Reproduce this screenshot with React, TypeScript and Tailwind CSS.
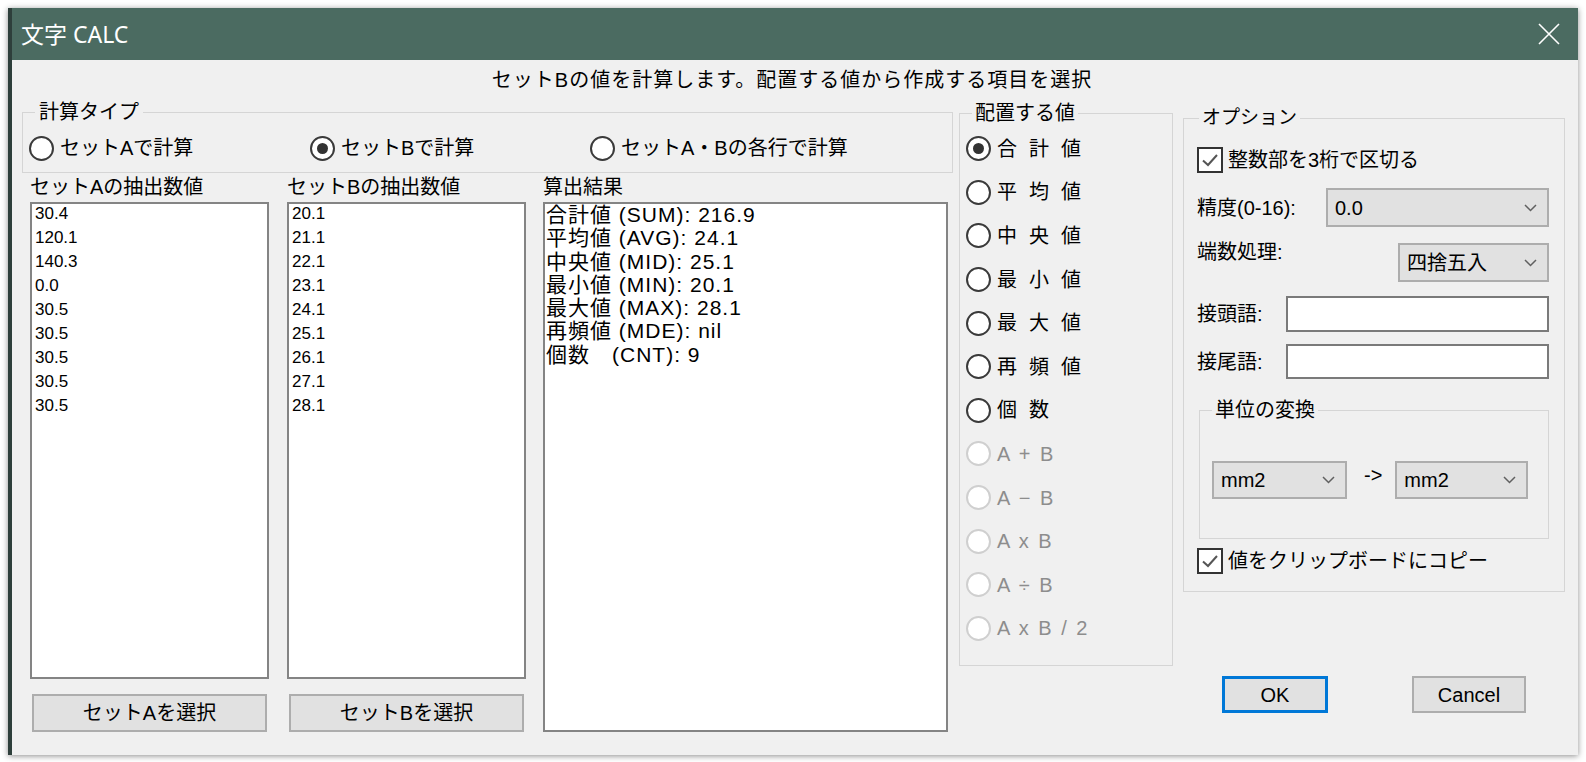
import React from 'react';

const listA = ['30.4', '120.1', '140.3', '0.0', '30.5', '30.5', '30.5', '30.5', '30.5'];
const listB = ['20.1', '21.1', '22.1', '23.1', '24.1', '25.1', '26.1', '27.1', '28.1'];
const results = [
  '合計値 (SUM): 216.9',
  '平均値 (AVG): 24.1',
  '中央値 (MID): 25.1',
  '最小値 (MIN): 20.1',
  '最大値 (MAX): 28.1',
  '再頻値 (MDE): nil',
  '個数\u3000(CNT): 9',
];

const placeItems = [
  { label: '合計値', checked: true },
  { label: '平均値' },
  { label: '中央値' },
  { label: '最小値' },
  { label: '最大値' },
  { label: '再頻値' },
  { label: '個数' },
  { label: 'A + B', disabled: true },
  { label: 'A − B', disabled: true },
  { label: 'A x B', disabled: true },
  { label: 'A ÷ B', disabled: true },
  { label: 'A x B / 2', disabled: true },
];

function Radio({ checked = false, disabled = false }: { checked?: boolean; disabled?: boolean }) {
  return (
    <span
      className={`flex h-[25px] w-[25px] shrink-0 items-center justify-center rounded-full border-2 bg-white ${
        disabled ? 'border-[#cfcfcf]' : 'border-[#3a3a3a]'
      }`}
    >
      {checked && <span className="h-[11px] w-[11px] rounded-full bg-[#333333]" />}
    </span>
  );
}

function Checkbox() {
  return (
    <span className="flex h-[26px] w-[26px] shrink-0 items-center justify-center border-2 border-[#333333] bg-white">
      <svg width="20" height="20" viewBox="0 0 20 20" fill="none">
        <path d="M3 10.5 L8 15 L17 5" stroke="#555555" strokeWidth="2" />
      </svg>
    </span>
  );
}

function Chevron() {
  return (
    <svg width="13" height="8" viewBox="0 0 13 8" fill="none">
      <path d="M1 1 L6.5 6.5 L12 1" stroke="#606060" strokeWidth="1.5" />
    </svg>
  );
}

function Combo({ value, className }: { value: string; className: string }) {
  return (
    <div
      className={`flex items-center justify-between border-2 border-[#adadad] bg-[#e1e1e1] pl-[7px] pr-[10px] ${className}`}
    >
      <span>{value}</span>
      <Chevron />
    </div>
  );
}

export default function App() {
  return (
    <div className="min-h-screen bg-white p-[8px] font-['Liberation_Sans','Noto_Sans_CJK_JP',sans-serif] text-[20px] text-black">
      <div className="flex h-[747px] w-[1570px] flex-col border-l-4 border-[#2e3f3b] bg-[#f0f0f0] shadow-[0_1px_6px_rgba(0,0,0,0.45)]">
        {/* Title bar */}
        <div className="flex h-[52px] shrink-0 items-center justify-between bg-[#4b6b61] pl-[9px] pr-[18px]">
          <span className="font-['Noto_Sans','Noto_Sans_CJK_JP',sans-serif] text-[23px] text-white">文字 CALC</span>
          <svg width="22" height="22" viewBox="0 0 22 22" fill="none">
            <path d="M1 1 L21 21 M21 1 L1 21" stroke="#ffffff" strokeWidth="1.6" />
          </svg>
        </div>

        {/* Header */}
        <div className="flex h-[40px] shrink-0 justify-center pr-[6px] pt-[8px] leading-[24px] tracking-[1px]">
          セットBの値を計算します。配置する値から作成する項目を選択
        </div>

        {/* Main */}
        <div className="flex items-start pl-[10px]">
          {/* Left */}
          <div className="flex w-[931px] flex-col">
            <fieldset className="border border-[#d5d5d5]">
              <legend className="ml-[12px] px-[4px] leading-[24px]">計算タイプ</legend>
              <div className="flex h-[48px] items-center pl-[6px]">
                <div className="flex w-[281px] items-center gap-[6px]">
                  <Radio />
                  <span>セットAで計算</span>
                </div>
                <div className="flex w-[280px] items-center gap-[6px]">
                  <Radio checked />
                  <span>セットBで計算</span>
                </div>
                <div className="flex items-center gap-[6px]">
                  <Radio />
                  <span>セットA・Bの各行で計算</span>
                </div>
              </div>
            </fieldset>

            <div className="flex">
              <div className="ml-[8px] flex w-[239px] flex-col">
                <div className="h-[29px] pt-[2px] leading-[24px]">セットAの抽出数値</div>
                <div className="h-[477px] border-2 border-[#848484] bg-white px-[3px] pt-[1px] text-[17px]">
                  {listA.map((v, i) => (
                    <div key={i} className="h-[24px] leading-[17px]">
                      {v}
                    </div>
                  ))}
                </div>
                <button className="mx-[2px] mt-[15px] h-[38px] border-2 border-[#adadad] bg-[#e1e1e1]">
                  セットAを選択
                </button>
              </div>

              <div className="ml-[18px] flex w-[239px] flex-col">
                <div className="h-[29px] pt-[2px] leading-[24px]">セットBの抽出数値</div>
                <div className="h-[477px] border-2 border-[#848484] bg-white px-[3px] pt-[1px] text-[17px]">
                  {listB.map((v, i) => (
                    <div key={i} className="h-[24px] leading-[17px]">
                      {v}
                    </div>
                  ))}
                </div>
                <button className="mx-[2px] mt-[15px] h-[38px] border-2 border-[#adadad] bg-[#e1e1e1]">
                  セットBを選択
                </button>
              </div>

              <div className="ml-[17px] flex w-[405px] flex-col">
                <div className="h-[29px] pt-[2px] leading-[24px]">算出結果</div>
                <div className="h-[530px] border-2 border-[#848484] bg-white px-[1px] pt-[1px] text-[21px] tracking-[1px]">
                  {results.map((v, i) => (
                    <div key={i} className="h-[23.3px] whitespace-pre leading-[20px]">
                      {v}
                    </div>
                  ))}
                </div>
              </div>
            </div>
          </div>

          {/* Placement values */}
          <fieldset className="ml-[6px] mt-[1px] h-[565px] w-[214px] border border-[#d5d5d5]">
            <legend className="ml-[12px] px-[3px] leading-[24px]">配置する値</legend>
            <div className="flex flex-col pl-[6px] pt-[2px]">
              {placeItems.map((it, i) => (
                <div key={i} className="flex h-[43.6px] items-center gap-[6px]">
                  <Radio checked={it.checked} disabled={it.disabled} />
                  {it.disabled ? (
                    <span className="tracking-[2px] text-[#8d8d8d]">{it.label}</span>
                  ) : (
                    <span className="tracking-[12px]">{it.label}</span>
                  )}
                </div>
              ))}
            </div>
          </fieldset>

          {/* Options */}
          <div className="ml-[10px] flex w-[382px] flex-col">
            <fieldset className="mt-[6px] h-[486px] border border-[#d5d5d5] pl-[13px] pr-[15px]">
              <legend className="ml-[2px] px-[3px] text-[19px] leading-[24px]">オプション</legend>
              <div className="mt-[17px] flex h-[26px] items-center gap-[5px]">
                <Checkbox />
                <span>整数部を3桁で区切る</span>
              </div>
              <div className="mt-[15px] flex items-center justify-between">
                <span>精度(0-16):</span>
                <Combo value="0.0" className="h-[39px] w-[223px]" />
              </div>
              <div className="mt-[16px] flex items-start justify-between">
                <span className="-mt-[3px] leading-[24px]">端数処理:</span>
                <Combo value="四捨五入" className="h-[39px] w-[151px]" />
              </div>
              <div className="mt-[14px] flex items-center justify-between">
                <span>接頭語:</span>
                <div className="h-[36px] w-[263px] border-2 border-[#7a7a7a] bg-white" />
              </div>
              <div className="mt-[12px] flex items-center justify-between">
                <span>接尾語:</span>
                <div className="h-[35px] w-[263px] border-2 border-[#7a7a7a] bg-white" />
              </div>
              <fieldset className="ml-[2px] mt-[19px] h-[141px] w-[350px] border border-[#d5d5d5]">
                <legend className="ml-[12px] px-[3px] leading-[24px]">単位の変換</legend>
                <div className="mt-[39px] flex items-center pl-[12px]">
                  <Combo value="mm2" className="h-[38px] w-[135px]" />
                  <span className="ml-[17px] -mt-[10px]">-&gt;</span>
                  <Combo value="mm2" className="ml-[13px] h-[38px] w-[133px]" />
                </div>
              </fieldset>
              <div className="mt-[9px] flex h-[26px] items-center gap-[5px]">
                <Checkbox />
                <span>値をクリップボードにコピー</span>
              </div>
            </fieldset>

            <div className="mt-[84px] flex pl-[39px]">
              <button className="h-[37px] w-[106px] border-[3px] border-[#0078d7] bg-[#e1e1e1]">OK</button>
              <button className="ml-[84px] h-[37px] w-[114px] border-2 border-[#adadad] bg-[#e1e1e1]">Cancel</button>
            </div>
          </div>
        </div>
      </div>
    </div>
  );
}
